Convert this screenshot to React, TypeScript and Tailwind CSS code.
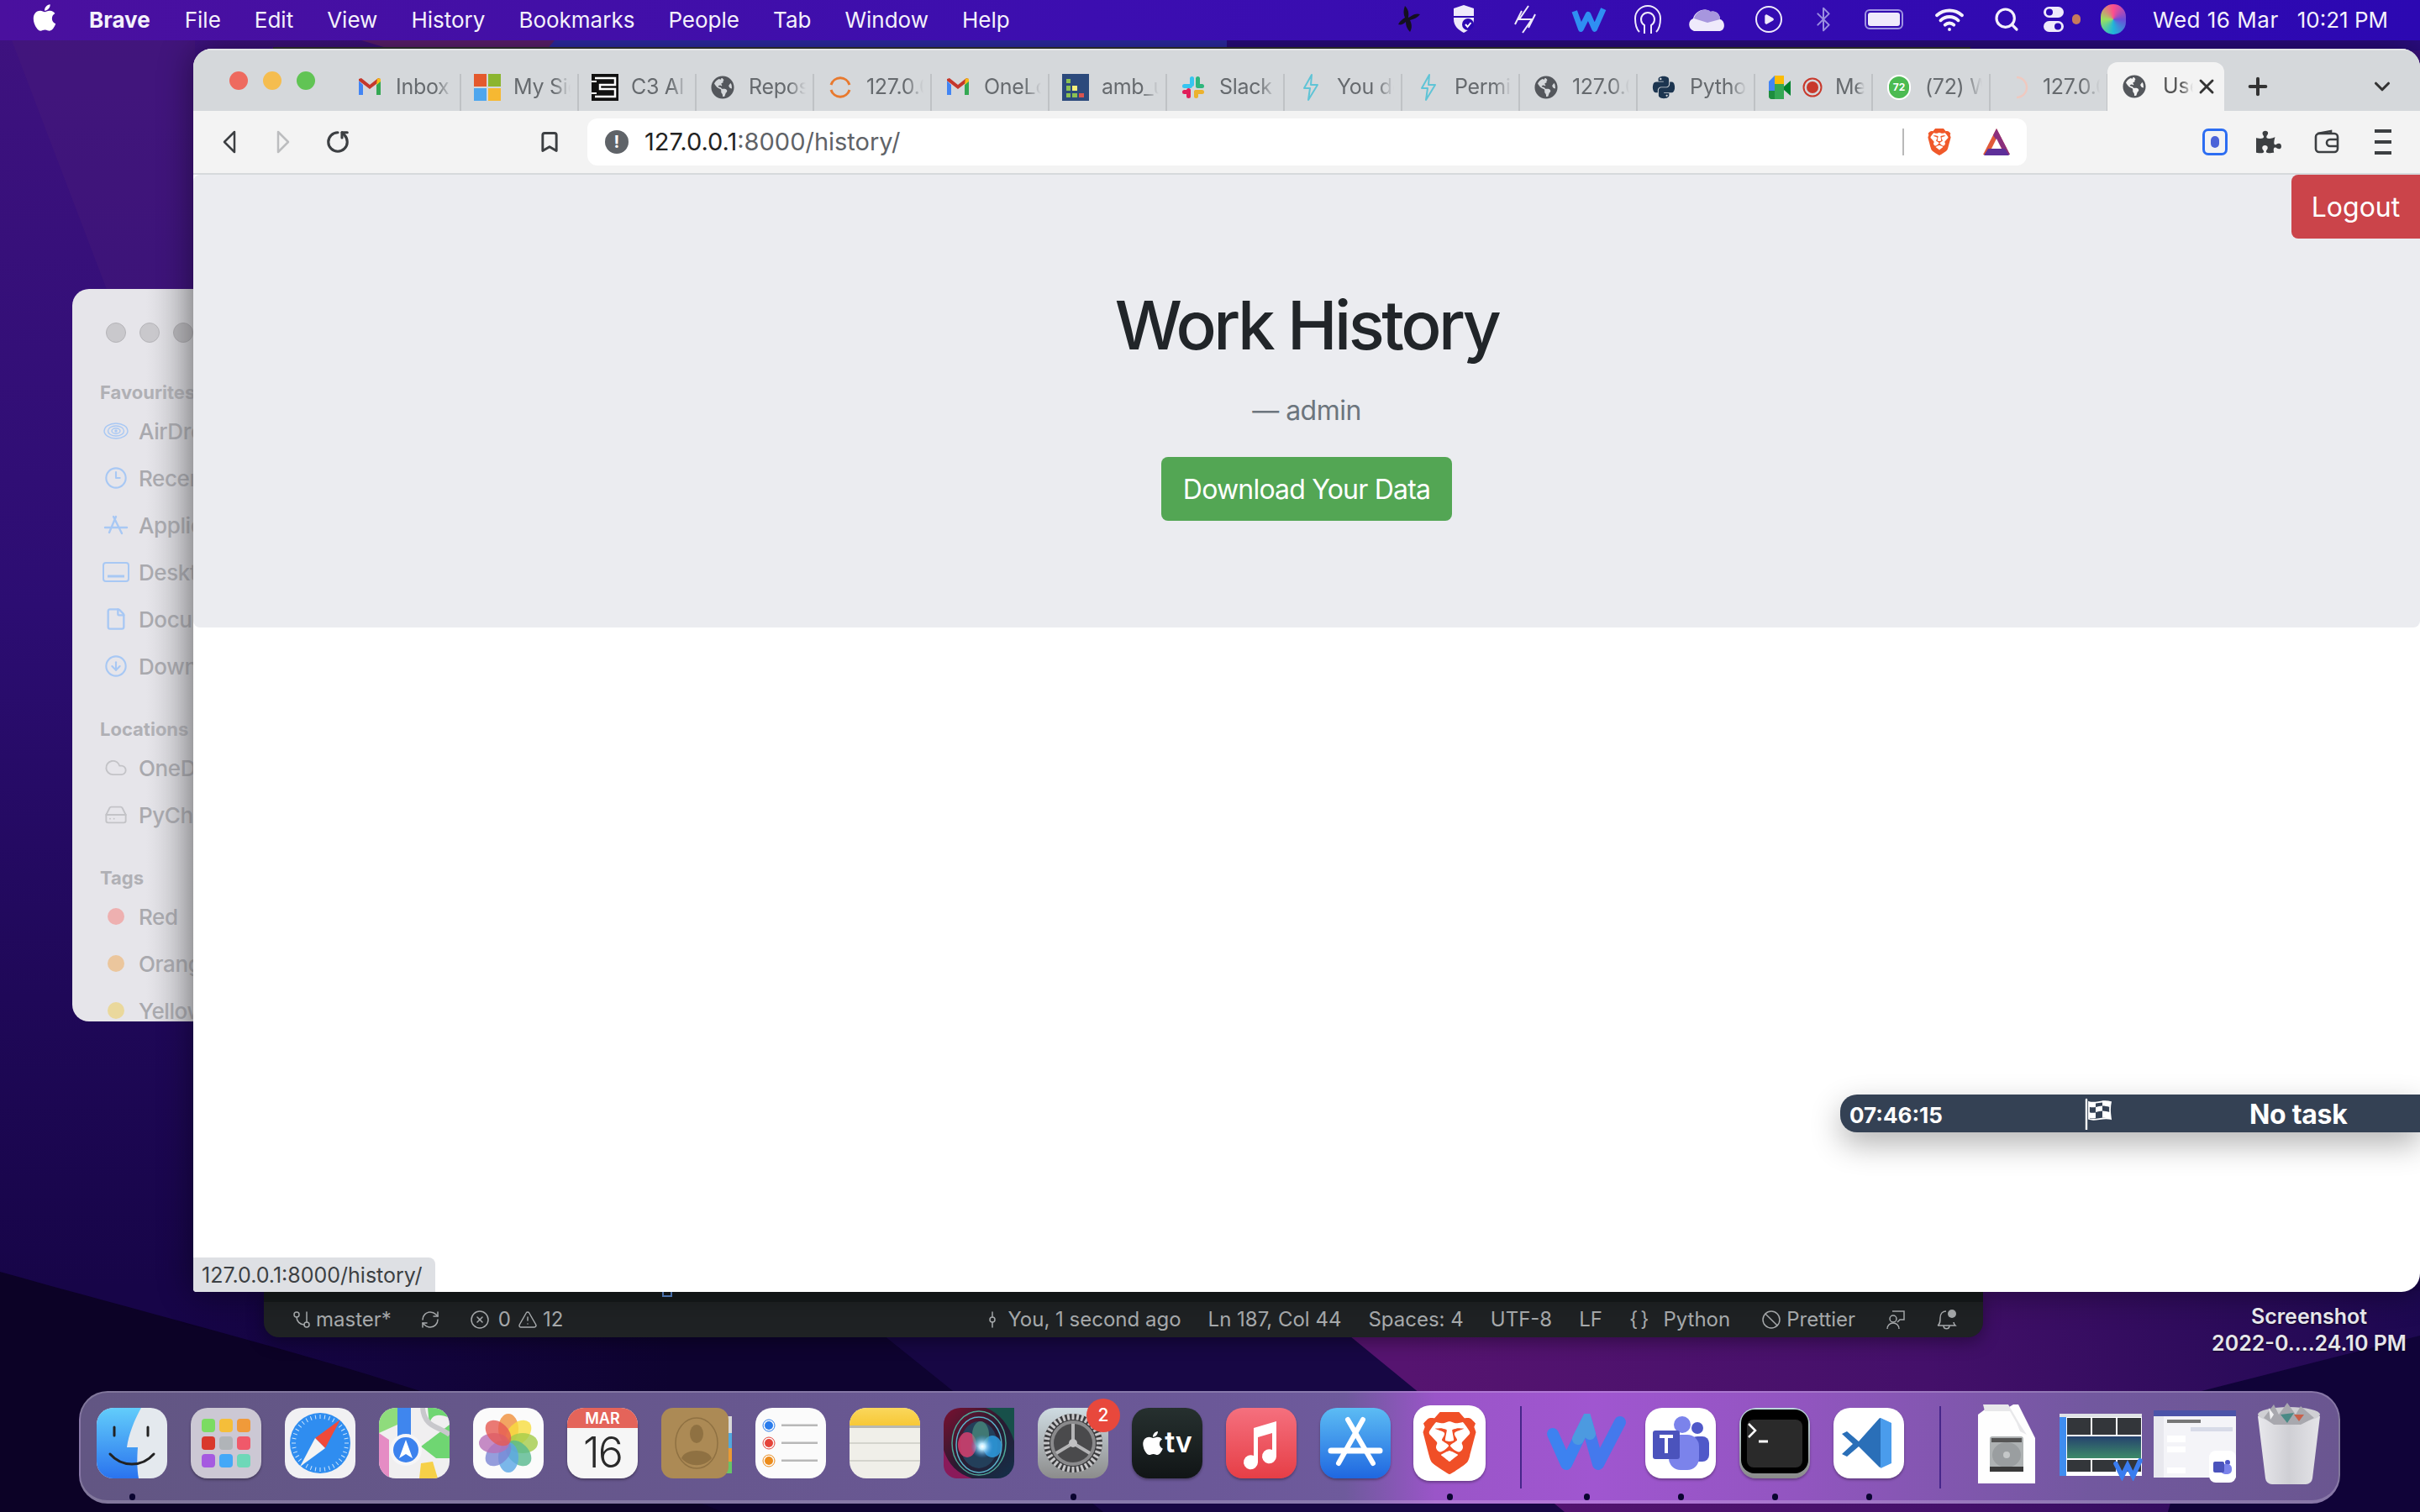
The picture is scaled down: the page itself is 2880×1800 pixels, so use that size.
import { FaApple, FaGlobeAmericas, FaPython, FaPuzzlePiece } from 'react-icons/fa';
import { SiBrave } from 'react-icons/si';
import { Clock3, File, CircleArrowDown, Cloud, HardDrive, GitBranch, RefreshCw, CircleX, TriangleAlert, GitCommitVertical, Ban, X, Plus, ChevronDown, RotateCw, Bookmark, Search, Wifi, Bluetooth, Play } from 'lucide-react';
import type { ReactNode } from 'react';

const sans = "font-['Inter','Liberation_Sans',sans-serif]";

/* ---------- favicons ---------- */

function Gmail() {
  return (
    <svg viewBox="0 0 30 30" className="w-[30px] h-[30px]">
      <path d="M2 7v17h5V12z" fill="#4285f4" />
      <path d="M23 12v12h5V7z" fill="#34a853" />
      <path d="M2 7l13 10L28 7v-2l-3-1-10 8L5 4 2 5z" fill="#c5382c" />
      <path d="M24 4l4 1v3l-5 4z" fill="#f6bb18" />
    </svg>
  );
}

function Microsoft() {
  return (
    <svg viewBox="0 0 32 32" className="w-[32px] h-[32px]">
      <rect x="0" y="0" width="15" height="15" fill="#e4592d" />
      <rect x="17" y="0" width="15" height="15" fill="#8bb52f" />
      <rect x="0" y="17" width="15" height="15" fill="#4ea6ee" />
      <rect x="17" y="17" width="15" height="15" fill="#f6b832" />
    </svg>
  );
}

function C3() {
  return (
    <svg viewBox="0 0 32 32" className="w-[32px] h-[32px]">
      <rect width="32" height="32" fill="#111" />
      <path d="M4 5h24v8H10v5h18v9H4" fill="none" stroke="#fff" strokeWidth="2.5" />
      <path d="M0 9h6M0 23h6" stroke="#fff" strokeWidth="2" />
    </svg>
  );
}

function Globe({ className = 'text-[#54575c]' }: { className?: string }) {
  return <FaGlobeAmericas className={`w-[28px] h-[28px] ${className}`} />;
}

function Spinner127() {
  return (
    <svg viewBox="0 0 30 30" className="w-[30px] h-[30px]">
      <path d="M4 12a11.5 11.5 0 0 1 22 0" fill="none" stroke="#e8792e" strokeWidth="3" />
      <path d="M4 18a11.5 11.5 0 0 0 22 0" fill="none" stroke="#e8792e" strokeWidth="3" />
    </svg>
  );
}

function AmbUtils() {
  return (
    <svg viewBox="0 0 32 32" className="w-[32px] h-[32px]">
      <rect width="32" height="32" fill="#2c4a7c" />
      <rect x="5" y="6" width="5" height="5" fill="#8cc152" />
      <rect x="5" y="14" width="5" height="6" fill="#8cc152" />
      <rect x="5" y="23" width="5" height="5" fill="#8cc152" />
      <rect x="12" y="14" width="6" height="6" fill="#f6ef7a" />
      <rect x="12" y="23" width="6" height="5" fill="#8cc152" />
      <rect x="20" y="23" width="6" height="5" fill="#d9534f" />
    </svg>
  );
}

function Slack() {
  return (
    <svg viewBox="0 0 30 30" className="w-[30px] h-[30px]">
      <rect x="11" y="2" width="5" height="12" rx="2.5" fill="#36c5f0" />
      <rect x="2" y="11" width="12" height="5" rx="2.5" fill="#36c5f0" />
      <rect x="18" y="2" width="5" height="12" rx="2.5" fill="#2eb67d" />
      <rect x="18" y="11" width="10" height="5" rx="2.5" fill="#2eb67d" />
      <rect x="16" y="18" width="12" height="5" rx="2.5" fill="#ecb22e" />
      <rect x="16" y="18" width="5" height="10" rx="2.5" fill="#ecb22e" />
      <rect x="7" y="16" width="5" height="12" rx="2.5" fill="#e01e5a" />
      <rect x="2" y="18" width="10" height="5" rx="2.5" fill="#e01e5a" />
    </svg>
  );
}

function Bolt() {
  return (
    <svg viewBox="0 0 24 32" className="w-[24px] h-[32px]">
      <path d="M13 1L4 17h7l-2 14 11-18h-8z" fill="none" stroke="#60c4d6" strokeWidth="2" strokeLinejoin="round" />
    </svg>
  );
}

function Meet() {
  return (
    <span className="flex items-center gap-[12px] -ml-[1px]">
      <svg viewBox="0 0 30 30" className="w-[30px] h-[30px] shrink-0">
        <path d="M2 8l7-7h11v10H9v8H2z" fill="#4285f4" />
        <path d="M9 1h11v10H9z" fill="#fbbc04" />
        <path d="M2 19h7v-8h11v18H6a4 4 0 0 1-4-4z" fill="#34a853" />
        <path d="M2 19h7v10H6a4 4 0 0 1-4-4z" fill="#1e8e3e" />
        <path d="M20 14l8-7v18l-8-7z" fill="#00832d" />
      </svg>
      <svg viewBox="0 0 24 30" className="w-[24px] h-[30px] shrink-0">
        <circle cx="12" cy="15" r="10.5" fill="none" stroke="#c8392c" strokeWidth="2" />
        <circle cx="12" cy="15" r="7" fill="#c8392c" />
      </svg>
    </span>
  );
}

function WhatsApp72() {
  return (
    <span className="relative flex items-center justify-center w-[30px] h-[32px]">
      <span className="w-[28px] h-[30px] rounded-full bg-[#4cbb52] border-2 border-white flex items-center justify-center text-white text-[12px] font-bold leading-none">
        72
      </span>
    </span>
  );
}

function FadeSpinner() {
  return (
    <svg viewBox="0 0 30 30" className="w-[30px] h-[30px]">
      <path d="M15 3a12 12 0 0 1 0 24" fill="none" stroke="#efc9c0" strokeWidth="2.5" />
    </svg>
  );
}

const tabs: { title: string; icon: ReactNode }[] = [
  { title: 'Inbox', icon: <Gmail /> },
  { title: 'My Sign-ins', icon: <Microsoft /> },
  { title: 'C3 AI', icon: <C3 /> },
  { title: 'Repositories', icon: <Globe /> },
  { title: '127.0.0.1', icon: <Spinner127 /> },
  { title: 'OneLogin', icon: <Gmail /> },
  { title: 'amb_utils', icon: <AmbUtils /> },
  { title: 'Slack', icon: <Slack /> },
  { title: 'You do', icon: <Bolt /> },
  { title: 'Permissions', icon: <Bolt /> },
  { title: '127.0.0.1', icon: <Globe /> },
  { title: 'Python', icon: <FaPython className="w-[30px] h-[30px] text-[#1c3550]" /> },
  { title: 'Meet', icon: <Meet /> },
  { title: '(72) WhatsApp', icon: <WhatsApp72 /> },
  { title: '127.0.0.1', icon: <FadeSpinner /> },
];

function Tab({ title, icon }: { title: string; icon: ReactNode }) {
  return (
    <div className="w-[140px] h-[44px] shrink-0 flex items-center pl-[15px] pr-[8px] pb-[12px] border-r-2 border-[#bfc2c5]">
      <span className="min-w-[32px] flex justify-center shrink-0 mr-[15px]">{icon}</span>
      <span className="overflow-hidden whitespace-nowrap flex-1 min-w-0 text-[25px] tracking-[-0.3px] text-[#666a6e] [mask-image:linear-gradient(to_right,black_70%,transparent)]">
        {title}
      </span>
    </div>
  );
}

/* ---------- menu bar ---------- */

const menus = ['File', 'Edit', 'View', 'History', 'Bookmarks', 'People', 'Tab', 'Window', 'Help'];

function MenuBar() {
  return (
    <div className={`${sans} h-[48px] pb-[2px] flex items-center text-[#f4f1fb] text-[26px] bg-[linear-gradient(90deg,#4a109e,#3c0eb0_45%,#2c08b2)]`}>
      <FaApple className="w-[34px] h-[36px] ml-[36px] mr-[36px] text-white -mt-1" />
      <span className="font-bold mr-[41px]">Brave</span>
      <div className="flex gap-[40px]">
        {menus.map((m) => (
          <span key={m}>{m}</span>
        ))}
      </div>
      <div className="ml-auto flex items-center pr-[38px]">
        <svg viewBox="0 0 36 36" className="w-[36px] h-[36px] mr-[33px]">
          <path d="M14 2c6 6 4 12 4 14 4-2 8-6 14-4-3 4-8 6-12 7 2 4 3 9 0 14-4-4-5-8-5-12-3 3-6 4-9 3 2-4 5-6 8-8-2-4-2-9 0-14z" fill="#14101f" />
        </svg>
        <svg viewBox="0 0 30 36" className="w-[30px] h-[36px] mr-[42px]">
          <path d="M15 1l12 4v13c0 8-6 13-12 16C9 31 3 26 3 18V5z" fill="#efeafb" />
          <path d="M3 15h24" stroke="#2c08b2" strokeWidth="2" />
          <circle cx="20" cy="24" r="7" fill="#2c08b2" />
          <path d="M17 24l2.5 3 4-5" stroke="#fff" strokeWidth="2" fill="none" />
        </svg>
        <svg viewBox="0 0 32 36" className="w-[32px] h-[36px] mr-[37px]" fill="none" stroke="#efeafb" strokeWidth="2">
          <path d="M20 2L9 18l14 0M13 34l11-16H9M4 24l8-16M28 12l-8 16" />
        </svg>
        <svg viewBox="0 0 48 36" className="w-[46px] h-[36px] mr-[30px]">
          <path d="M6 8l8 22 9-18 8 18L42 5" fill="none" stroke="#2f8ff2" strokeWidth="7" strokeLinejoin="round" />
        </svg>
        <svg viewBox="0 0 34 38" className="w-[34px] h-[38px] mr-[32px]" fill="none" stroke="#efeafb" strokeWidth="2">
          <path d="M7 34C3 30 2 25 2 18a15 15 0 0 1 30 0c0 7-1 12-5 16" />
          <path d="M13 36V26a8 8 0 1 1 8 0v10" />
        </svg>
        <svg viewBox="0 0 46 36" className="w-[46px] h-[36px] mr-[33px]">
          <path d="M6 32a8 8 0 0 1-1-15c2-9 14-14 20-8 6-2 12 2 12 9 6 1 7 13 0 14z" fill="#efeafb" />
          <path d="M6 17c2-9 14-14 20-8 6-2 11 3 11 9L22 22z" fill="#a796de" />
        </svg>
        <Play className="w-[32px] h-[32px] text-[#efeafb] mr-[33px] rounded-full border-2 border-[#efeafb] p-[7px] fill-[#efeafb]" strokeWidth={2} />
        <Bluetooth className="w-[32px] h-[36px] text-[#9b8fe0] mr-[33px]" strokeWidth={1.5} />
        <div className="w-[46px] h-[24px] mr-[37px] rounded-[6px] border-2 border-[#9f93e2] p-[2px]">
          <div className="w-full h-full rounded-[3px] bg-[#efeafb]" />
        </div>
        <Wifi className="w-[36px] h-[36px] text-[#f4f1fb] mr-[34px]" strokeWidth={2.6} />
        <Search className="w-[32px] h-[32px] text-[#f4f1fb] mr-[26px]" strokeWidth={2.4} />
        <svg viewBox="0 0 28 34" className="w-[28px] h-[34px] mr-[8px]">
          <rect x="2" y="2" width="24" height="13" rx="6.5" fill="#efeafb" />
          <rect x="2" y="19" width="24" height="13" rx="6.5" fill="#efeafb" />
          <circle cx="9" cy="8.5" r="4" fill="#2c08b2" />
          <circle cx="19" cy="25.5" r="4" fill="#2c08b2" />
        </svg>
        <span className="w-[10px] h-[12px] rounded-full bg-[#c77a5c] mr-[24px]" />
        <span className="w-[30px] h-[36px] rounded-full mr-[32px] bg-[conic-gradient(#ff4d8d,#6d4bd8,#1fb6d9,#9be15d,#ff4d8d)]" />
        <span className="mr-[22px] tracking-[0.5px]">Wed 16 Mar</span>
        <span>10:21 PM</span>
      </div>
    </div>
  );
}

/* ---------- browser ---------- */

function Toolbar() {
  return (
    <div className="h-[74px] bg-[#f3f3f3] flex items-center shrink-0">
      <svg viewBox="0 0 24 30" className="w-[24px] h-[30px] ml-[32px] mr-[38px]" fill="none" stroke="#3c3f42" strokeWidth="2.5" strokeLinejoin="round">
        <path d="M17 3L5 15l12 12z" />
      </svg>
      <svg viewBox="0 0 24 30" className="w-[24px] h-[30px] mr-[39px]" fill="none" stroke="#bcbdbf" strokeWidth="2.5" strokeLinejoin="round">
        <path d="M7 3l12 12L7 27z" />
      </svg>
      <RotateCw className="w-[30px] h-[30px] text-[#3c3f42] mr-[223px] -scale-x-100 rotate-[90deg]" strokeWidth={2.5} />
      <Bookmark className="w-[28px] h-[32px] text-[#3c3f42] mr-[31px]" strokeWidth={2.5} />
      <div className="w-[1713px] h-[56px] bg-white rounded-[12px] flex items-center pl-[21px] pr-[18px]">
        <span className="w-[28px] h-[28px] rounded-full bg-[#5f6368] text-white text-[20px] font-bold flex items-center justify-center mr-[19px]">!</span>
        <span className="text-[29px] text-[#5f6368]">
          <span className="text-[#222]">127.0.0.1</span>:8000/history/
        </span>
        <span className="ml-auto w-[2px] h-[32px] bg-[#b9b9b9] mr-[26px]" />
        <SiBrave className="w-[32px] h-[36px] text-[#f0592a] mr-[34px]" />
        <svg viewBox="0 0 36 36" className="w-[36px] h-[36px]">
          <path d="M18 2L2 33h32z" fill="#e05a3a" />
          <path d="M18 2l-4 8 15 23h5z" fill="#8a2f7e" />
          <path d="M12 26h12l-6-12z" fill="#fff" />
          <path d="M8 26h20l5 8H3z" fill="#5e2f99" />
        </svg>
      </div>
      <div className="ml-[209px] flex items-center">
        <span className="w-[30px] h-[32px] rounded-[7px] border-[3px] border-[#2c6df2] flex items-center justify-center mr-[34px]">
          <span className="w-[10px] h-[14px] rounded-full bg-[#4b63d8]" />
        </span>
        <FaPuzzlePiece className="w-[30px] h-[30px] text-[#3c3f42] mr-[38px]" />
        <svg viewBox="0 0 32 32" className="w-[32px] h-[32px] mr-[41px]" fill="none" stroke="#3c3f42" strokeWidth="2.6">
          <rect x="3" y="6" width="26" height="22" rx="4" />
          <path d="M5 6l16-3v3M29 13h-9a4 4 0 0 0 0 8h9" />
        </svg>
        <div className="flex flex-col gap-[9px]">
          <span className="w-[20px] h-[4px] bg-[#3c3f42]" />
          <span className="w-[20px] h-[4px] bg-[#3c3f42]" />
          <span className="w-[20px] h-[4px] bg-[#3c3f42]" />
        </div>
      </div>
    </div>
  );
}

function CheckeredFlag() {
  return (
    <svg viewBox="0 0 32 38" className="w-[32px] h-[38px]">
      <path d="M2 2v36" stroke="#fff" strokeWidth="2.4" strokeLinecap="round" />
      <path d="M5 5c8 3 15-3 26 0-2 8-1 13 0 20-9-3-18 3-26 0z" fill="none" stroke="#fff" strokeWidth="1.8" />
      <path d="M5 5c3 1 5 1 8 .5V11c-3 .5-5 .5-8-.5zM21 3.5c3 0 6 .5 10 1.500-1 2-1.300 4-1.300 6-3-1-6-1.500-8.700-1.500zM13 11c3-.5 5-1.500 8-1.500v6c-3 0-5 1-8 1.500zM5 17c3 1 5 1 8 .5V24c-3 .5-5 .5-8-.5zM21 15.500c3 0 6 .5 9 1.500 0 3 .5 5 1 8-3-1-7-1.500-10-1.500z" fill="#fff" />
    </svg>
  );
}

function BrowserWindow() {
  return (
    <div className={`${sans} absolute left-[230px] top-[58px] w-[2650px] h-[1480px] flex flex-col overflow-hidden rounded-t-[22px] rounded-bl-[4px] rounded-br-[22px] bg-white shadow-[0_0_40px_rgba(0,0,0,0.45)]`}>
      <div className="h-[74px] bg-[#d5d8db] flex items-end shrink-0 border-t-2 border-[#e4e5e7]">
        <div className="flex items-start gap-[18px] w-[179px] pl-[43px] self-start pt-[25px]">
          <span className="w-[22px] h-[22px] rounded-full bg-[#ee6a5f]" />
          <span className="w-[22px] h-[22px] rounded-full bg-[#f5bd4f]" />
          <span className="w-[22px] h-[22px] rounded-full bg-[#61c454]" />
        </div>
        <div className="flex items-end h-[44px]">
          {tabs.map((t, i) => (
            <Tab key={i} title={t.title} icon={t.icon} />
          ))}
        </div>
        <div className="w-[139px] h-[58px] -ml-[1px] bg-[#f3f3f3] rounded-t-[12px] flex items-center pl-[18px] shrink-0">
          <Globe />
          <span className="overflow-hidden whitespace-nowrap w-[36px] ml-[20px] text-[25px] text-[#555] [mask-image:linear-gradient(to_right,black_60%,transparent)]">Users</span>
          <X className="w-[28px] h-[28px] text-[#333] ml-[2px]" strokeWidth={2.5} />
        </div>
        <div className="flex items-center flex-1 h-[58px]">
          <Plus className="w-[32px] h-[32px] text-[#333] ml-[24px]" strokeWidth={3} />
          <ChevronDown className="w-[30px] h-[30px] text-[#333] ml-auto mr-[30px]" strokeWidth={2.5} />
        </div>
      </div>
      <Toolbar />
      <div className="h-[2px] bg-[#d6d9dc] shrink-0" />
      <div className="relative flex-1">
        <div className="h-[539px] bg-[#ebecf0] rounded-[8px] flex flex-col items-center pt-[131px] text-[#212529]">
          <h1 className="text-[80px] leading-[96px] font-medium tracking-[-3.5px]">Work History</h1>
          <p className="mt-[30px] text-[32px] leading-[48px] text-[#6c757d] tracking-[-0.5px]">— admin</p>
          <button className="mt-[31px] w-[346px] h-[76px] pt-[2px] rounded-[8px] bg-[#53a654] text-white text-[32px] tracking-[-0.8px]">Download Your Data</button>
        </div>
        <button className="absolute right-0 top-0 w-[153px] h-[76px] pt-[2px] rounded-l-[8px] bg-[#cb444a] text-white text-[32px]">Logout</button>
        <div className="absolute left-[1960px] top-[1095px] w-[690px] h-[45px] pt-[3px] bg-[#344154] rounded-l-[20px] shadow-[0_14px_36px_rgba(0,0,0,0.3)] flex items-center text-white font-bold">
          <span className="text-[26px] ml-[11px] w-[280px]">07:46:15</span>
          <span className="-mt-[3px]"><CheckeredFlag /></span>
          <span className="text-[32px] ml-[164px] tracking-[-0.3px]">No task</span>
        </div>
        <div className="absolute left-0 bottom-0 w-[288px] h-[41px] pt-[2px] bg-[#dee0e4] rounded-tr-[8px] flex items-center pl-[10px] text-[25px] text-[#3c4043] whitespace-nowrap">
          127.0.0.1:8000/history/
        </div>
      </div>
    </div>
  );
}

/* ---------- finder behind the browser ---------- */

function AirDropIcon() {
  return (
    <svg viewBox="0 0 30 20" className="w-[30px] h-[22px]" fill="none" stroke="#a8c8f4" strokeWidth="1.4">
      <ellipse cx="15" cy="10" rx="14" ry="9" />
      <ellipse cx="15" cy="10" rx="9.5" ry="6" />
      <ellipse cx="15" cy="10" rx="5" ry="3.2" />
      <circle cx="15" cy="10" r="1" />
    </svg>
  );
}

function AppsIcon() {
  return (
    <svg viewBox="0 0 30 26" className="w-[30px] h-[26px]" fill="none" stroke="#a8c8f4" strokeWidth="2.4" strokeLinecap="round">
      <path d="M15 3L7 22M12 3l10 20M2 16h26" />
    </svg>
  );
}

function FinderRow({ icon, label }: { icon: ReactNode; label: string }) {
  return (
    <div className="h-[56px] flex items-center">
      <span className="w-[36px] shrink-0 flex justify-center mr-[9px]">{icon}</span>
      <span className="text-[26px] tracking-[-0.4px] font-medium text-[#a9a9ae] whitespace-nowrap">{label}</span>
    </div>
  );
}

function FinderLabel({ text, mt }: { text: string; mt: string }) {
  return <div className={`${mt} h-[32px] leading-[28px] -ml-[1px] text-[22px] font-bold text-[#b0b0b5]`}>{text}</div>;
}

function FinderWindow() {
  const ic = 'w-[28px] h-[28px] text-[#a8c8f4]';
  const gray = 'w-[32px] h-[28px] text-[#c3c3c7]';
  return (
    <div className={`${sans} absolute left-[86px] top-[344px] w-[146px] h-[872px] rounded-l-[20px] overflow-hidden bg-[linear-gradient(90deg,#e6e5ea_60%,#c9c9cd)]`}>
      <div className="flex gap-[16px] pl-[40px] pt-[40px] h-[109px]">
        <span className="w-[24px] h-[24px] shrink-0 rounded-full bg-[#c9c8cc] border border-[#b5b4b8]" />
        <span className="w-[24px] h-[24px] shrink-0 rounded-full bg-[#c9c8cc] border border-[#b5b4b8]" />
        <span className="w-[24px] h-[24px] shrink-0 rounded-full bg-[#b5b4b8] border border-[#a9a8ac]" />
      </div>
      <div className="pl-[34px] w-[200px]">
        <FinderLabel text="Favourites" mt="" />
        <FinderRow icon={<AirDropIcon />} label="AirDrop" />
        <FinderRow icon={<Clock3 className={ic} strokeWidth={1.8} />} label="Recents" />
        <FinderRow icon={<AppsIcon />} label="Applications" />
        <FinderRow icon={<svg viewBox="0 0 32 24" className="w-[32px] h-[24px]" fill="none" stroke="#a8c8f4" strokeWidth="2"><rect x="1" y="1" width="30" height="22" rx="3" /><path d="M6 17h20" strokeWidth="3" /></svg>} label="Desktop" />
        <FinderRow icon={<File className={ic} strokeWidth={2} />} label="Documents" />
        <FinderRow icon={<CircleArrowDown className={ic} strokeWidth={1.8} />} label="Downloads" />
        <FinderLabel text="Locations" mt="mt-[33px]" />
        <FinderRow icon={<Cloud className={gray} strokeWidth={1.6} />} label="OneDrive" />
        <FinderRow icon={<HardDrive className={gray} strokeWidth={1.6} />} label="PyCharm" />
        <FinderLabel text="Tags" mt="mt-[33px]" />
        <FinderRow icon={<span className="w-[20px] h-[20px] rounded-full bg-[#eeb0b0]" />} label="Red" />
        <FinderRow icon={<span className="w-[20px] h-[20px] rounded-full bg-[#ebc69d]" />} label="Orange" />
        <FinderRow icon={<span className="w-[20px] h-[20px] rounded-full bg-[#ead89c]" />} label="Yellow" />
      </div>
    </div>
  );
}

/* ---------- vs code status bar peeking out under the browser ---------- */

function BellDot() {
  return (
    <svg viewBox="0 0 26 28" className="w-[26px] h-[28px]" fill="none" stroke="#a9acae" strokeWidth="1.5">
      <path d="M2 21c3-2 3-5 3-9 0-5 3-8 7-8M2 21h21c-1-1-2-2-2-4M9 21c0 5 7 5 7 0" />
      <circle cx="19" cy="7" r="5" fill="#a9acae" stroke="none" />
    </svg>
  );
}

function VsCodeBar() {
  const t = 'text-[24px] text-[#a9acae] whitespace-nowrap';
  const ic = 'w-[24px] h-[24px] text-[#a9acae]';
  return (
    <div className={`${sans} absolute left-[314px] top-[1538px] w-[2046px] h-[54px] bg-[#1f2224] rounded-b-[18px] overflow-hidden shadow-[0_6px_20px_rgba(0,0,0,0.35)]`}>
      <div className="h-[12px] bg-[#161a1b] relative">
        <span className="absolute left-[474px] top-0 w-[12px] h-[6px] border-2 border-t-0 border-[#5b8ad0]" />
      </div>
      <div className={`h-[42px] flex items-center pl-[33px] ${t}`}>
        <GitBranch className={`${ic} mr-[5px] -scale-x-100`} strokeWidth={1.5} />
        <span>master*</span>
        <RefreshCw className={`${ic} ml-[34px]`} strokeWidth={1.5} />
        <CircleX className={`${ic} ml-[35px]`} strokeWidth={1.5} />
        <span className="ml-[10px]">0</span>
        <TriangleAlert className={`${ic} ml-[8px]`} strokeWidth={1.5} />
        <span className="ml-[6px]">12</span>
        <GitCommitVertical className={`${ic} ml-[499px]`} strokeWidth={1.5} />
        <span className="ml-[6px]">You, 1 second ago</span>
        <span className="ml-[32px]">Ln 187, Col 44</span>
        <span className="ml-[32px]">Spaces: 4</span>
        <span className="ml-[32px]">UTF-8</span>
        <span className="ml-[32px]">LF</span>
        <span className="ml-[32px] tracking-[3px]">{'{}'}</span>
        <span className="ml-[14px]">Python</span>
        <Ban className={`${ic} ml-[37px]`} strokeWidth={1.5} />
        <span className="ml-[6px]">Prettier</span>
        <svg viewBox="0 0 24 24" className={`${ic} ml-[36px]`} fill="none" stroke="currentColor" strokeWidth="1.5">
          <circle cx="9" cy="11" r="4" />
          <path d="M2 23c0-4 3-7 7-7s7 3 7 7M8 2h14v10h-5l-3 3" />
        </svg>
        <span className="ml-[36px]"><BellDot /></span>
      </div>
    </div>
  );
}

/* ---------- dock ---------- */

function Tile({ className = '', children }: { className?: string; children?: ReactNode }) {
  return <div className={`relative w-[84px] h-[84px] rounded-[20px] overflow-hidden shadow-[0_2px_3px_rgba(0,0,0,0.3)] ${className}`}>{children}</div>;
}

function FinderIcon() {
  return (
    <svg viewBox="0 0 84 84" className="w-[84px] h-[84px]">
      <defs>
        <linearGradient id="finderBlue" x1="0" y1="0" x2="0" y2="1">
          <stop offset="0" stopColor="#62cdfb" />
          <stop offset="1" stopColor="#2a73ee" />
        </linearGradient>
      </defs>
      <rect width="84" height="84" rx="20" fill="#e4e9ee" />
      <path d="M20 0h33c-8 14-15 32-17 47h13c-1 12-1 26 1 37H20A20 20 0 0 1 0 64V20A20 20 0 0 1 20 0z" fill="url(#finderBlue)" />
      <path d="M21 23v10M61 23v10" stroke="#222" strokeWidth="3" strokeLinecap="round" />
      <path d="M16 55c14 16 38 16 52 0" fill="none" stroke="#222" strokeWidth="3" strokeLinecap="round" />
    </svg>
  );
}

function Launchpad() {
  const colors = ['#7bdc62', '#f5be3a', '#f09a3a', '#d9382c', '#b0b4b8', '#f0596a', '#a55ae0', '#44a8f8', '#6ed8b8'];
  return (
    <Tile className="bg-[#ccc8d4] grid grid-cols-3 gap-[5px] p-[13px]">
      {colors.map((c) => (
        <span key={c} className="rounded-[4px]" style={{ backgroundColor: c }} />
      ))}
    </Tile>
  );
}

function Safari() {
  const ticks = Array.from({ length: 36 }, (_, i) => i * 10);
  return (
    <svg viewBox="0 0 84 84" className="w-[84px] h-[84px]">
      <rect width="84" height="84" rx="20" fill="#f1f1f3" />
      <circle cx="42" cy="42" r="36" fill="#2f8df0" />
      {ticks.map((a) => (
        <path key={a} d="M42 8v5" stroke="#cfe6fb" strokeWidth="1" transform={`rotate(${a} 42 42)`} />
      ))}
      <path d="M66 14L36 36l12 12z" fill="#ef4a3a" />
      <path d="M18 70l30-22-12-12z" fill="#f4f4f4" />
    </svg>
  );
}

function Maps() {
  return (
    <svg viewBox="0 0 84 84" className="w-[84px] h-[84px]">
      <defs>
        <clipPath id="mapClip"><rect width="84" height="84" rx="20" /></clipPath>
      </defs>
      <g clipPath="url(#mapClip)">
        <rect width="84" height="84" fill="#f0eff0" />
        <path d="M0 0h22v20L0 30z" fill="#8fdc7c" />
        <path d="M50 46l34-26v40H68z" fill="#6fd672" />
        <path d="M58 0h26v12C70 6 62 8 60 20z" fill="#6fd672" />
        <path d="M0 30l12 8v46H0z" fill="#e58cc4" />
        <path d="M48 84l2-18 14-2 6 20z" fill="#f6d048" />
        <rect x="22" y="0" width="16" height="34" fill="#3f86ee" />
        <path d="M52 0c2 24 20 22 32 32" stroke="#c8c8cc" strokeWidth="6" fill="none" />
        <circle cx="32" cy="50" r="19" fill="#f6f6f8" />
        <circle cx="32" cy="50" r="15" fill="#3c82ee" />
        <path d="M32 38l-8 22 8-5 8 5z" fill="#fff" />
      </g>
    </svg>
  );
}

function Photos() {
  const petals = [
    ['#f0903c', 0], ['#f7dd3f', 45], ['#a4cc4a', 90], ['#58b98f', 135],
    ['#5ba6e6', 180], ['#7c86d4', 225], ['#b870b8', 270], ['#e65a52', 315],
  ] as const;
  return (
    <svg viewBox="0 0 84 84" className="w-[84px] h-[84px]">
      <rect width="84" height="84" rx="20" fill="#fbfbfb" />
      {petals.map(([c, a]) => (
        <ellipse key={a} cx="42" cy="25" rx="12" ry="18" fill={c} opacity="0.8" transform={`rotate(${a} 42 42)`} />
      ))}
    </svg>
  );
}

function CalendarIcon() {
  return (
    <Tile className="bg-[#f6f6f6] flex flex-col items-center">
      <div className="w-full h-[26px] shrink-0 bg-[#e4645a] text-white text-[18px] font-semibold flex items-center justify-center border-b-2 border-[#f4f4f4]">MAR</div>
      <div className="text-[50px] leading-[54px] text-[#2a2a2a] font-light tracking-[-2px]">16</div>
    </Tile>
  );
}

function Contacts() {
  return (
    <svg viewBox="0 0 84 84" className="w-[84px] h-[84px]">
      <rect x="74" y="10" width="10" height="20" fill="#d8d8d8" />
      <rect x="74" y="30" width="10" height="18" fill="#50a8e0" />
      <rect x="74" y="48" width="10" height="16" fill="#eb9a33" />
      <rect x="74" y="64" width="10" height="14" fill="#68c468" />
      <rect width="80" height="84" rx="14" fill="#ac8a55" />
      <ellipse cx="42" cy="42" rx="25" ry="30" fill="none" stroke="#8f7142" strokeWidth="1.5" />
      <ellipse cx="42" cy="31" rx="8" ry="11" fill="#8f7142" />
      <path d="M24 60c4-12 32-12 36 0-9 11-27 11-36 0z" fill="#8f7142" />
    </svg>
  );
}

function Reminders() {
  return (
    <svg viewBox="0 0 84 84" className="w-[84px] h-[84px]">
      <rect width="84" height="84" rx="20" fill="#fbfbfb" />
      {(['#2a7cec', '#e5443a', '#ec8c1c'] as const).map((c, i) => (
        <g key={c}>
          <circle cx="16" cy={21 + i * 21} r="5" fill={c} />
          <circle cx="16" cy={21 + i * 21} r="7" fill="none" stroke={c} strokeWidth="1" />
          <rect x="31" y={19.5 + i * 21} width="43" height="2.5" fill="#b8b8b8" />
        </g>
      ))}
    </svg>
  );
}

function Notes() {
  return (
    <svg viewBox="0 0 84 84" className="w-[84px] h-[84px]">
      <defs>
        <clipPath id="noteClip"><rect width="84" height="84" rx="20" /></clipPath>
        <linearGradient id="noteTop" x1="0" y1="0" x2="0" y2="1">
          <stop offset="0" stopColor="#fad75c" />
          <stop offset="1" stopColor="#f7c836" />
        </linearGradient>
      </defs>
      <g clipPath="url(#noteClip)">
        <rect width="84" height="84" fill="#f0efe9" />
        <rect width="84" height="21" fill="url(#noteTop)" />
        <rect y="21" width="84" height="3" fill="#b8b8b0" />
        <rect y="41" width="84" height="2" fill="#d4d4cd" />
        <rect y="62" width="84" height="2" fill="#d4d4cd" />
      </g>
    </svg>
  );
}

function Siri() {
  return (
    <svg viewBox="0 0 84 84" className="w-[84px] h-[84px]">
      <defs>
        <linearGradient id="siriBg" x1="0" y1="0" x2="1" y2="1">
          <stop offset="0" stopColor="#7a1030" />
          <stop offset="0.5" stopColor="#2a1a30" />
          <stop offset="1" stopColor="#12304a" />
        </linearGradient>
        <radialGradient id="siriCore">
          <stop offset="0" stopColor="#ffffff" />
          <stop offset="0.25" stopColor="#c0ecff" />
          <stop offset="1" stopColor="#2a86d8" stopOpacity="0" />
        </radialGradient>
      </defs>
      <rect width="84" height="84" rx="20" fill="url(#siriBg)" />
      <path d="M84 0v40C78 20 66 6 50 0z" fill="#17504a" />
      <path d="M0 50c6 18 16 28 34 34H16A16 16 0 0 1 0 68z" fill="#8a1a5a" />
      <ellipse cx="42" cy="42" rx="32" ry="38" fill="none" stroke="#4fa898" strokeWidth="1.5" />
      <ellipse cx="42" cy="44" rx="27" ry="33" fill="none" stroke="#5ab0c8" strokeWidth="1.5" />
      <ellipse cx="42" cy="44" rx="22" ry="28" fill="#233f5a" />
      <ellipse cx="28" cy="44" rx="11" ry="15" fill="#d8406e" opacity="0.85" />
      <ellipse cx="58" cy="46" rx="11" ry="13" fill="#2d9ce0" opacity="0.85" />
      <ellipse cx="44" cy="32" rx="10" ry="16" fill="#5aa88a" opacity="0.55" />
      <circle cx="46" cy="46" r="14" fill="url(#siriCore)" />
    </svg>
  );
}

function SysPrefs() {
  const spokes = Array.from({ length: 36 }, (_, i) => i * 10);
  return (
    <svg viewBox="0 0 84 84" className="w-[84px] h-[84px]">
      <defs>
        <linearGradient id="prefBg" x1="0" y1="0" x2="0" y2="1">
          <stop offset="0" stopColor="#cfdce2" />
          <stop offset="1" stopColor="#8c8c8c" />
        </linearGradient>
      </defs>
      <rect width="84" height="84" rx="20" fill="url(#prefBg)" />
      <circle cx="42" cy="42" r="35" fill="#3a3a3c" />
      {spokes.map((a) => (
        <rect key={a} x="40.500" y="7" width="3" height="7" fill="#c8c8ca" transform={`rotate(${a} 42 42)`} />
      ))}
      <circle cx="42" cy="42" r="27" fill="#8a8a8c" />
      <circle cx="42" cy="42" r="23" fill="#4a4a4c" />
      <path d="M42 42V19M42 42L22 54M42 42l20 12" stroke="#b4b4b6" strokeWidth="4" />
      <circle cx="42" cy="42" r="5" fill="#c0c0c2" />
    </svg>
  );
}

function BadgeTwo() {
  return (
    <span className="absolute -top-[11px] left-[58px] w-[40px] h-[40px] rounded-full bg-[#e8483c] text-white text-[21px] font-medium flex items-center justify-center">2</span>
  );
}

function AppleTv() {
  return (
    <Tile className="bg-[linear-gradient(180deg,#26302f,#111516)] flex items-center justify-center gap-[1px] text-white">
      <FaApple className="w-[26px] h-[32px]" />
      <span className="text-[34px] font-semibold leading-none -mt-[2px]">tv</span>
    </Tile>
  );
}

function Music() {
  return (
    <Tile className="bg-[linear-gradient(180deg,#f5707e,#e63e46)] flex items-center justify-center">
      <svg viewBox="0 0 84 84" className="w-[84px] h-[84px]">
        <path d="M33 24l27-8v42a8.5 8.5 0 1 1-5-8V30l-17 5v30a8.5 8.5 0 1 1-5-8z" fill="#fff" />
      </svg>
    </Tile>
  );
}

function AppStore() {
  return (
    <Tile className="bg-[linear-gradient(180deg,#5cbcf4,#1f67e0)]">
      <svg viewBox="0 0 84 84" className="w-[84px] h-[84px]" stroke="#fff" strokeLinecap="round" fill="none">
        <path d="M51 14L22 66" strokeWidth="6" />
        <path d="M33 14l30 52" strokeWidth="6" />
        <path d="M13 51h58" strokeWidth="7" />
      </svg>
    </Tile>
  );
}

function BraveDock() {
  return (
    <Tile className="bg-white flex items-center justify-center !w-[86px] !h-[90px] -mt-[3px]">
      <SiBrave className="w-[74px] h-[80px] text-[#f04f27]" />
    </Tile>
  );
}

function WIcon() {
  return (
    <svg viewBox="0 0 100 70" className="w-[100px] h-[70px] mt-[7px] -mx-[8px]">
      <path d="M10 24l16 36L50 10" fill="none" stroke="#3d82f0" strokeWidth="14" strokeLinecap="round" strokeLinejoin="round" />
      <path d="M50 10l14 50L90 10" fill="none" stroke="#3a7df0" strokeWidth="14" strokeLinecap="round" strokeLinejoin="round" opacity="0.9" />
      <path d="M40 30L50 10l4 14" fill="none" stroke="#4c9ae0" strokeWidth="14" strokeLinecap="round" />
    </svg>
  );
}

function Teams() {
  return (
    <Tile className="bg-white">
      <svg viewBox="0 0 84 84" className="w-[84px] h-[84px]">
        <circle cx="62" cy="24" r="7" fill="#5059c9" />
        <circle cx="44" cy="20" r="10" fill="#7b83eb" />
        <rect x="54" y="34" width="22" height="30" rx="8" fill="#5059c9" />
        <rect x="28" y="32" width="36" height="42" rx="14" fill="#7b83eb" />
        <rect x="9" y="27" width="32" height="34" rx="3" fill="#4b53bc" />
        <path d="M17 34h16M25 34v20" stroke="#fff" strokeWidth="4" />
      </svg>
    </Tile>
  );
}

function Terminal() {
  return (
    <Tile className="bg-[linear-gradient(180deg,#bcd6dc,#8a8a8a)] p-[2px] pb-[6px]">
      <div className="w-full h-full rounded-[16px] bg-black p-[7px] pt-[14px] relative">
        <div className="absolute inset-x-[7px] top-[12px] bottom-[7px] rounded-[8px] bg-[#2a2a2a]" />
        <svg viewBox="0 0 40 30" className="relative w-[40px] h-[30px]">
          <path d="M2 3l8 8-8 8" fill="none" stroke="#fff" strokeWidth="2.5" />
          <path d="M14 24h11" stroke="#fff" strokeWidth="3" />
        </svg>
      </div>
    </Tile>
  );
}

function VsCode() {
  return (
    <Tile className="bg-white">
      <svg viewBox="0 0 84 84" className="w-[84px] h-[84px]">
        <path d="M55 12L30 40 16 28l-6 3 13 12-13 12 6 3 14-12 25 25 13-6V18z" fill="#2a6fb8" />
        <path d="M56 12l13 6v48l-13 6z" fill="#4a9cec" />
      </svg>
    </Tile>
  );
}

function Doc() {
  return (
    <svg viewBox="0 0 68 96" className="w-[68px] h-[96px]">
      <path d="M8 8h24l10-6h6l20 40v54H0V14z" fill="#fefefe" />
      <path d="M6 2h30l14 24 8 12-8-4-4-10-8-14H8z" fill="#e8e8ea" />
      <rect x="14" y="40" width="40" height="42" rx="3" fill="#aeb2b3" />
      <rect x="16" y="42" width="36" height="5" fill="#555" />
      <ellipse cx="34" cy="62" rx="17" ry="15" fill="#9a9ea0" />
      <circle cx="34" cy="62" r="4" fill="#c4c7c8" />
      <rect x="14" y="76" width="40" height="6" fill="#3a3a3a" />
    </svg>
  );
}

function ShotA() {
  return (
    <div className="relative w-[98px] h-[74px] bg-[#2f3134] border-t-[4px] border-[#dfe2e6] flex">
      <span className="w-[8px] shrink-0 bg-[#3f8df0]" />
      <div className="flex-1 bg-white grid grid-cols-3 grid-rows-[20px_26px_14px] gap-[2px] p-[1px]">
        <span className="bg-[#33363a]" />
        <span className="bg-[#33363a]" />
        <span className="bg-[#33363a]" />
        <span className="col-span-3 bg-[linear-gradient(0deg,#3d8a68,#25426e)]" />
        <span className="bg-[#33363a]" />
        <span className="bg-[#33363a]" />
        <span className="bg-[#33363a]" />
      </div>
      <svg viewBox="0 0 40 30" className="absolute right-[-2px] bottom-[-6px] w-[38px] h-[28px]">
        <path d="M5 8l8 16 7-14 7 14 9-20" fill="none" stroke="#3a7df0" strokeWidth="6" strokeLinecap="round" />
      </svg>
    </div>
  );
}

function ShotB() {
  return (
    <div className="relative w-[98px] h-[80px] bg-[#f4f4f8] border-t-[7px] border-[#4b53a8] flex">
      <span className="w-[12px] shrink-0 bg-[#e8e8ee]" />
      <div className="flex-1 flex flex-col gap-[5px] pt-[4px] px-[4px]">
        <span className="w-[40px] h-[4px] bg-[#777]" />
        <span className="self-end w-[50px] h-[5px] bg-[#d8dbe8]" />
        <span className="w-[22px] h-[8px] bg-white" />
        <span className="w-[22px] h-[7px] bg-white" />
        <span className="self-end w-[18px] h-[8px] bg-[#d8dbe8]" />
        <span className="w-[22px] h-[7px] bg-white" />
      </div>
      <span className="absolute right-[0px] bottom-[-6px] w-[32px] h-[38px] rounded-[8px] bg-white flex items-center justify-center">
        <svg viewBox="0 0 24 24" className="w-[24px] h-[24px]">
          <circle cx="18" cy="7" r="3" fill="#5059c9" />
          <rect x="10" y="9" width="13" height="12" rx="5" fill="#7b83eb" />
          <rect x="1" y="6" width="13" height="13" rx="2" fill="#4b53bc" />
        </svg>
      </span>
    </div>
  );
}

function Trash() {
  return (
    <svg viewBox="0 0 76 98" className="w-[76px] h-[98px]">
      <defs>
        <linearGradient id="trashBg" x1="0" y1="0" x2="1" y2="0">
          <stop offset="0" stopColor="#e8e8ec" />
          <stop offset="0.5" stopColor="#cfcfd4" />
          <stop offset="1" stopColor="#e4e4e8" />
        </linearGradient>
      </defs>
      <path d="M1 16h74l-9 74a8 8 0 0 1-8 7H18a8 8 0 0 1-8-7z" fill="url(#trashBg)" />
      <ellipse cx="38" cy="14" rx="37" ry="9" fill="#d0d0d4" />
      <path d="M8 18L20 2l6 12 10-14 10 14 6-10 16 14-16 8H20z" fill="#a8a8ae" />
      <path d="M28 14l8 10 8-12z" fill="#4a8a86" />
      <path d="M44 14l6 8 6-8z" fill="#c8604a" />
      <path d="M14 6l6 8-4 6z" fill="#f0f0f2" />
    </svg>
  );
}

function DockItem({ children, dot }: { children: ReactNode; dot?: boolean }) {
  return (
    <div className="w-[84px] flex flex-col items-center">
      <div className="relative h-[84px] flex items-start justify-center">{children}</div>
      <span className={`mt-[18px] w-[7px] h-[8px] rounded-full ${dot ? 'bg-[#0a0530]' : 'bg-transparent'}`} />
    </div>
  );
}

function Dock() {
  return (
    <div className={`${sans} absolute left-[94px] top-[1656px] w-[2691px] h-[134px] rounded-[34px] border-2 border-white/20 border-b-4 bg-[linear-gradient(90deg,#625683,#6b5898_50%,#6e5a9c_56%,#9a55c8_60%,#a056d0_67%,#9255c0_76%,#72589f_89%,#6a5690)] flex pl-[19px] pt-[18px] gap-[28px]`}>
      <DockItem dot><FinderIcon /></DockItem>
      <DockItem><Launchpad /></DockItem>
      <DockItem><Safari /></DockItem>
      <DockItem><Maps /></DockItem>
      <DockItem><Photos /></DockItem>
      <DockItem><CalendarIcon /></DockItem>
      <DockItem><Contacts /></DockItem>
      <DockItem><Reminders /></DockItem>
      <DockItem><Notes /></DockItem>
      <DockItem><Siri /></DockItem>
      <DockItem dot><SysPrefs /><BadgeTwo /></DockItem>
      <DockItem><AppleTv /></DockItem>
      <DockItem><Music /></DockItem>
      <DockItem><AppStore /></DockItem>
      <DockItem dot><BraveDock /></DockItem>
      <span className="w-[2px] h-[98px] ml-[14px] mr-[7px] -mt-[2px] bg-[#46268a]" />
      <DockItem dot><WIcon /></DockItem>
      <DockItem dot><Teams /></DockItem>
      <DockItem dot><Terminal /></DockItem>
      <DockItem dot><VsCode /></DockItem>
      <span className="w-[2px] h-[98px] mx-[14px] -mt-[2px] bg-[#46268a]" />
      <div className="-ml-[13px] flex gap-[14px] -mt-[6px] items-start">
        <div className="w-[98px] flex justify-center"><Doc /></div>
        <div className="w-[98px] mt-[13px]"><ShotA /></div>
        <div className="w-[98px] mt-[9px]"><ShotB /></div>
        <div className="w-[98px] flex justify-center"><Trash /></div>
      </div>
    </div>
  );
}

/* ---------- wallpaper ---------- */

function Wallpaper() {
  return (
    <svg viewBox="0 0 2880 1800" className="absolute inset-0 w-[2880px] h-[1800px]">
      <defs>
        <linearGradient id="wpLeft" x1="0" y1="0" x2="0" y2="1">
          <stop offset="0" stopColor="#3f1280" />
          <stop offset="0.4" stopColor="#2c0d72" />
          <stop offset="0.66" stopColor="#1f0858" />
          <stop offset="0.85" stopColor="#170548" />
        </linearGradient>
        <linearGradient id="wpMagenta" gradientUnits="userSpaceOnUse" x1="1700" y1="1750" x2="2880" y2="1500">
          <stop offset="0" stopColor="#561470" />
          <stop offset="0.5" stopColor="#44106a" />
          <stop offset="1" stopColor="#1c0850" />
        </linearGradient>
        <linearGradient id="wpFade" gradientUnits="userSpaceOnUse" x1="200" y1="0" x2="800" y2="0">
          <stop offset="0" stopColor="#170548" />
          <stop offset="1" stopColor="#0e0330" />
        </linearGradient>
      </defs>
      <rect width="2880" height="1800" fill="url(#wpLeft)" />
      <path d="M14 48L232 620V48z" fill="#4a1e78" opacity="0.35" />
      <path d="M430 48h240l-20 12H470z" fill="#5e2070" />
      <path d="M660 48h800v12H650z" fill="#2e2ba8" />
      <path d="M1460 48h1420v12H1460z" fill="#2a0c80" />
      <path d="M200 1500h770l360 300H200z" fill="url(#wpFade)" />
      <path d="M0 1514C200 1570 360 1610 500 1656L860 1800H0z" fill="#0c0226" />
      <path d="M985 1536h555l322 264h-549z" fill="#170744" />
      <path d="M1540 1536h1340v264H1862z" fill="url(#wpMagenta)" />
      <path d="M2620 1656l260-66v210h-300z" fill="#100338" />
    </svg>
  );
}

export default function App() {
  return (
    <div className="relative w-[2880px] h-[1800px] overflow-hidden bg-[#14063e]">
      <Wallpaper />
      <div className="absolute left-[325px] top-[56px] w-[2020px] h-[3px] bg-[#333]" />
      <FinderWindow />
      <VsCodeBar />
      <BrowserWindow />
      <div className={`${sans} absolute left-[2600px] top-[1551px] w-[296px] text-center text-[#e6e6ea] text-[25px] leading-[32px] font-semibold [text-shadow:0_1px_2px_rgba(0,0,0,0.6)]`}>
        <div>Screenshot</div>
        <div>2022-0....24.10 PM</div>
      </div>
      <Dock />
      <div className="absolute inset-x-0 top-0">
        <MenuBar />
      </div>
    </div>
  );
}
